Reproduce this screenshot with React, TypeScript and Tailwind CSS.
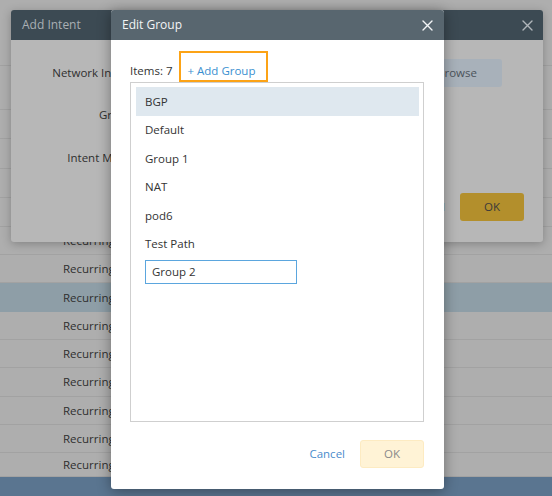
const rowHeights = [29, 30, 29, 29, 28, 28, 29, 28, 28, 29, 28, 28, 24];
const groups = ['BGP', 'Default', 'Group 1', 'NAT', 'pod6', 'Test Path'];

function CloseIcon({ color }: { color: string }) {
  return (
    <svg width="11" height="11" viewBox="0 0 11 11" fill="none">
      <path d="M1 1L10 10M10 1L1 10" stroke={color} strokeWidth="1.4" strokeLinecap="round" />
    </svg>
  );
}

function BackgroundTable() {
  return (
    <div className="flex flex-col">
      <div className="h-[66px] border-b border-[#a2a2a2]" />
      <div className="h-[44px] border-b border-[#a2a2a2]" />
      {rowHeights.map((h, i) => {
        const active = i === 6;
        // rows fully hidden behind the Add Intent dialog carry no label
        const hidden = i < 4;
        return (
          <div
            key={i}
            style={{ height: h }}
            className={`flex items-center pl-[63px] text-[#2f2f2f] ${
              active ? 'bg-[#8e9ea7]' : 'border-b border-[#a2a2a2]'
            }`}
          >
            {hidden ? null : 'Recurring'}
          </div>
        );
      })}
      <div className="h-[19px] bg-[#5a7590]" />
    </div>
  );
}

function AddIntentModal() {
  return (
    <div className="absolute left-[11px] top-[10px] w-[532px] h-[232px] rounded-[3px] overflow-hidden bg-[#b7b7b7] shadow-[0_2px_10px_rgba(0,0,0,0.25)]">
      <div className="h-[30px] bg-[#3c4a53] flex items-center justify-between pl-[11px] pr-[10px]">
        <span className="text-[12px] text-[#a9afb3]">Add Intent</span>
        <CloseIcon color="#b1b6ba" />
      </div>
      <div className="pt-[19px] text-[#2f2f2f]">
        <div className="flex items-center h-[28px]">
          <div className="w-[122px] text-right whitespace-nowrap">Network Intent</div>
          <div className="flex-1" />
          <div className="w-[90px] h-[28px] mr-[41px] rounded-[3px] bg-[#a8b1ba] flex items-center justify-center text-[#4b535a]">
            Browse
          </div>
        </div>
        <div className="flex items-center h-[28px] mt-[14px]">
          <div className="w-[122px] text-right">Group</div>
        </div>
        <div className="flex items-center h-[28px] mt-[15px]">
          <div className="w-[122px] text-right whitespace-nowrap">Intent Mode</div>
        </div>
        <div className="flex items-center justify-end mt-[21px] pr-[19px]">
          <span className="mr-[15px] text-[#45698a]">Cancel</span>
          <div className="w-[64px] h-[28px] rounded-[3px] bg-[#b38f2c] flex items-center justify-center text-[#3a3a3a]">
            OK
          </div>
        </div>
      </div>
    </div>
  );
}

function EditGroupModal() {
  return (
    <div className="absolute left-[111px] top-[10px] w-[333px] h-[479px] rounded-[3px] overflow-hidden bg-white shadow-[0_2px_14px_rgba(0,0,0,0.38)]">
      <div className="h-[30px] bg-[#58666f] flex items-center justify-between pl-[11px] pr-[11px]">
        <span className="text-[12px] font-medium text-[#f3f5f6]">Edit Group</span>
        <CloseIcon color="#f3f5f6" />
      </div>
      <div className="pl-[19px] pr-[20px]">
        <div className="flex h-[31px] mt-[11px]">
          <span className="flex items-center pt-[8px] text-[#333]">Items: 7</span>
          <div className="ml-[7px] pl-[6px] pr-[11px] flex items-center pt-[8px] border-2 border-[#fca316] text-[#3a8fd0]">
            + Add Group
          </div>
        </div>
        <div className="h-[340px] border border-[#cfcfcf] pt-[4px] pl-[5px] pr-[4px]">
          {groups.map((g, i) => (
            <div
              key={g}
              className={`h-[28.5px] flex items-center pl-[9px] text-[#333] ${
                i === 0 ? 'bg-[#dfe8ef]' : ''
              }`}
            >
              {g}
            </div>
          ))}
          <div className="mt-[2px] ml-[9px] w-[152px] h-[24px] border border-[#5ba6de] flex items-center pl-[6px] text-[#333]">
            Group 2
          </div>
        </div>
        <div className="flex items-center justify-end mt-[18px]">
          <span className="mr-[15px] text-[#4a8ccc]">Cancel</span>
          <div className="w-[64px] h-[28px] rounded-[3px] bg-[#fff3d6] border border-[#fdebc2] flex items-center justify-center text-[#8a8a8a]">
            OK
          </div>
        </div>
      </div>
    </div>
  );
}

export default function App() {
  return (
    <div
      className="relative w-[552px] h-[496px] overflow-hidden bg-[#aeaeae] text-[11.5px] leading-none"
      style={{ fontFamily: '"Open Sans", "Liberation Sans", sans-serif' }}
    >
      <BackgroundTable />
      <AddIntentModal />
      <EditGroupModal />
    </div>
  );
}
